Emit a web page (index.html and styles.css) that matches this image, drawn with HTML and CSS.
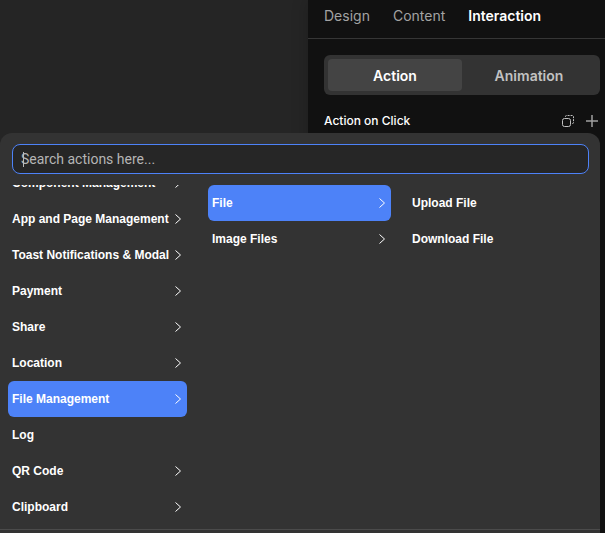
FILE: index.html
```html
<!DOCTYPE html>
<html lang="en">
<head>
<meta charset="utf-8">
<title>Interaction</title>
<link rel="stylesheet" href="styles.css">
</head>
<body>
<svg class="defs" aria-hidden="true"><symbol id="chevron" viewBox="0 0 8 12"><path d="M1.500 1.500 L6.500 6 L1.500 10.500" fill="none" stroke="currentColor" stroke-width="1"/></symbol></svg>
<aside class="inspector">
  <nav class="tabs">
    <a href="#design">Design</a>
    <a href="#content">Content</a>
    <a href="#interaction" class="current">Interaction</a>
  </nav>
  <div class="segments">
    <button type="button" class="segment selected">Action</button>
    <button type="button" class="segment">Animation</button>
  </div>
  <div class="heading">
    <h2>Action on Click</h2>
    <button type="button" class="icon" aria-label="Copy actions"><svg width="14" height="14" viewBox="0 0 14 14" fill="none" stroke="#c2c2c2"><rect x="1.500" y="4.500" width="8" height="8" rx="2"/><path d="M4.500 3V2.500q0-1 1-1H11.500q1 0 1 1V8.500q0 1-1 1H11" stroke-dasharray="2 1"/></svg></button>
    <button type="button" class="icon" aria-label="Add action"><svg width="14" height="14" viewBox="0 0 14 14" fill="none" stroke="#a0a0a0" stroke-width="1.500"><path d="M7 1V13M1 7H13"/></svg></button>
  </div>
</aside>
<section class="popup">
  <div class="search">
    <input type="text" placeholder="Search actions here..." aria-label="Search actions">
    <span class="caret"></span>
  </div>
  <div class="columns">
    <div class="column">
      <div class="scrolled">
        <button type="button" class="item">Component Management<svg><use href="#chevron"/></svg></button>
        <button type="button" class="item">App and Page Management<svg><use href="#chevron"/></svg></button>
        <button type="button" class="item">Toast Notifications &amp; Modal<svg><use href="#chevron"/></svg></button>
        <button type="button" class="item">Payment<svg><use href="#chevron"/></svg></button>
        <button type="button" class="item">Share<svg><use href="#chevron"/></svg></button>
        <button type="button" class="item">Location<svg><use href="#chevron"/></svg></button>
        <button type="button" class="item active">File Management<svg><use href="#chevron"/></svg></button>
        <button type="button" class="item">Log</button>
        <button type="button" class="item">QR Code<svg><use href="#chevron"/></svg></button>
        <button type="button" class="item">Clipboard<svg><use href="#chevron"/></svg></button>
      </div>
    </div>
    <div class="column">
      <button type="button" class="item active">File<svg><use href="#chevron"/></svg></button>
      <button type="button" class="item">Image Files<svg><use href="#chevron"/></svg></button>
    </div>
    <div class="column leaf">
      <button type="button" class="item">Upload File</button>
      <button type="button" class="item">Download File</button>
    </div>
  </div>
  <div class="footer"></div>
</section>
</body>
</html>
```
FILE: styles.css
```css
* { box-sizing: border-box; }
body {
  margin: 0;
  height: 100vh;
  display: flex;
  justify-content: flex-end;
  overflow: hidden;
  background: #252525;
  font-family: Inter, sans-serif;
}
button { border: 0; background: none; padding: 0; font: inherit; color: inherit; }
.defs { position: absolute; width: 0; height: 0; }

.inspector {
  width: 297px;
  background: #111;
  color: #fff;
  box-shadow: 0 0 16px rgba(0, 0, 0, .2);
}
.tabs {
  display: flex;
  gap: 23px;
  height: 39px;
  padding: 6px 16px 0;
  border-bottom: 1px solid #363636;
  font-size: 14px;
  line-height: 20px;
}
.tabs a { color: #a3a3a3; text-decoration: none; }
.tabs .current { color: #fff; font-weight: 600; }
.segments {
  display: flex;
  margin: 16px 5px 0 16px;
  padding: 4px;
  border-radius: 6px;
  background: #333;
}
.segment {
  flex: 1;
  height: 32px;
  border-radius: 4px;
  color: #c2c2c2;
  font-size: 14px;
  font-weight: 600;
}
.segment.selected { background: #444; color: #fff; }
.heading {
  display: flex;
  align-items: center;
  gap: 10px;
  margin: 16px 6px 0 16px;
  height: 20px;
}
.heading h2 { flex: 1; margin: 0; font-size: 12px; line-height: 20px; font-weight: 500; }
.icon { display: flex; }

.popup {
  position: absolute;
  inset: 133px 5px 0 0;
  display: flex;
  flex-direction: column;
  border-radius: 12px 12px 0 0;
  background: #333;
  color: #fff;
}
.search { position: relative; margin: 11px 11px 11px 12px; }
.search input {
  display: block;
  width: 100%;
  height: 30px;
  padding: 0 8px;
  border: 1px solid #4d82f8;
  border-radius: 8px;
  outline: 0;
  background: #262626;
  color: #fff;
  font: 14px Roboto, sans-serif;
}
.search input::placeholder { color: #b5b5b5; opacity: 1; }
.caret { position: absolute; left: 11px; top: 8px; width: 1px; height: 15px; background: #bbb; }
.columns {
  flex: 1;
  min-height: 0;
  display: grid;
  grid-template-columns: 179px 183px 1fr;
  column-gap: 21px;
  padding-left: 8px;
}
.column { overflow: hidden; }
.scrolled { margin-top: -20px; }
.item {
  display: flex;
  align-items: center;
  justify-content: space-between;
  width: 100%;
  height: 36px;
  padding: 0 5px 0 4px;
  border-radius: 6px;
  font: bold 12px "Liberation Sans", sans-serif;
  white-space: nowrap;
}
.leaf .item { padding-left: 0; }
.item.active { background: #4d82f8; }
.item svg { flex: none; width: 8px; height: 12px; }
.footer { height: 4px; border-top: 1px solid #4b4b4b; }
```
